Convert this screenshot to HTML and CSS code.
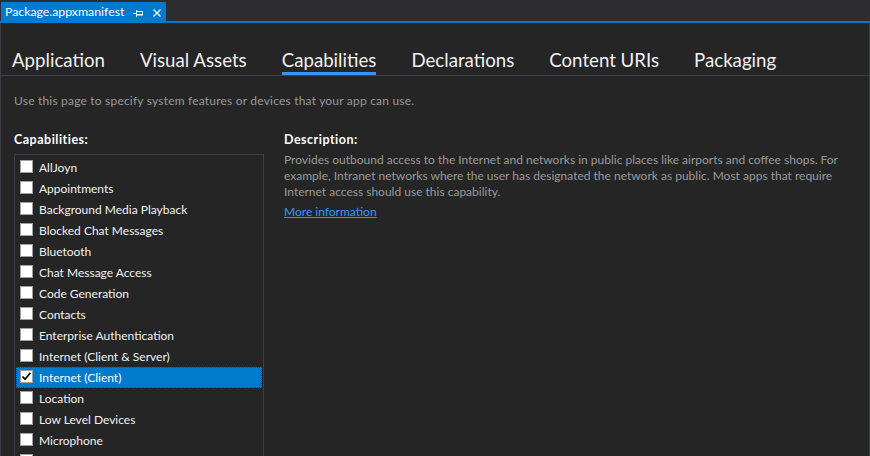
FILE: index.html
```html
<!DOCTYPE html>
<html lang="en">
<head>
<meta charset="utf-8">
<title>Package.appxmanifest</title>
<link rel="stylesheet" href="styles.css">
</head>
<body>
<div class="window">
  <div class="doctabs">
    <div class="doctab">
      <span class="doctab-title">Package.appxmanifest</span>
      <svg class="pin" width="10" height="7" viewBox="0 0 10 7" aria-hidden="true">
        <path d="M0 3.5H3.5M3.5 0V7M4 1.5H9.5V5M4 5H10" stroke="#ffffff" stroke-width="1" fill="none"/>
        <path d="M4 4.5H9.5" stroke="#ffffff" stroke-width="1"/>
      </svg>
      <svg class="close" width="8" height="8" viewBox="0 0 8 8" aria-hidden="true">
        <path d="M0.5 0.5L7.5 7.5M7.5 0.5L0.5 7.5" stroke="#ffffff" stroke-width="1.3" fill="none"/>
      </svg>
    </div>
  </div>
  <div class="pane">
    <nav class="pagetabs">
      <span class="ptab">Application</span>
      <span class="ptab">Visual Assets</span>
      <span class="ptab active">Capabilities</span>
      <span class="ptab">Declarations</span>
      <span class="ptab">Content URIs</span>
      <span class="ptab">Packaging</span>
    </nav>
    <p class="intro">Use this page to specify system features or devices that your app can use.</p>
    <div class="cols">
      <section class="caps">
        <h2 class="heading">Capabilities:</h2>
        <ul class="list">
          <li class="row"><span class="box"></span><span class="label">AllJoyn</span></li>
          <li class="row"><span class="box"></span><span class="label">Appointments</span></li>
          <li class="row"><span class="box"></span><span class="label">Background Media Playback</span></li>
          <li class="row"><span class="box"></span><span class="label">Blocked Chat Messages</span></li>
          <li class="row"><span class="box"></span><span class="label">Bluetooth</span></li>
          <li class="row"><span class="box"></span><span class="label">Chat Message Access</span></li>
          <li class="row"><span class="box"></span><span class="label">Code Generation</span></li>
          <li class="row"><span class="box"></span><span class="label">Contacts</span></li>
          <li class="row"><span class="box"></span><span class="label">Enterprise Authentication</span></li>
          <li class="row"><span class="box"></span><span class="label">Internet (Client &amp; Server)</span></li>
          <li class="row selected"><span class="box checked"><svg width="11" height="11" viewBox="0 0 11 11" aria-hidden="true"><path d="M1.5 5.5L4 8.2L9.5 1.8" stroke="#000000" stroke-width="1.7" fill="none"/></svg></span><span class="label">Internet (Client)</span></li>
          <li class="row"><span class="box"></span><span class="label">Location</span></li>
          <li class="row"><span class="box"></span><span class="label">Low Level Devices</span></li>
          <li class="row"><span class="box"></span><span class="label">Microphone</span></li>
          <li class="row"><span class="box"></span><span class="label">Music Library</span></li>
        </ul>
      </section>
      <section class="desc">
        <h2 class="heading">Description:</h2>
        <p class="desc-text">Provides outbound access to the Internet and networks in public places like airports and coffee shops. For<br>example, Intranet networks where the user has designated the network as public. Most apps that require<br>Internet access should use this capability.</p>
        <a class="more" href="#">More information</a>
      </section>
    </div>
  </div>
</div>
</body>
</html>
```

FILE: styles.css
```css
html, body {
  margin: 0;
  padding: 0;
}

body {
  background: #252526;
  color: #f1f1f1;
  font-family: Lato, "Segoe UI", "Open Sans", sans-serif;
  font-size: 12px;
  height: 456px;
  overflow: hidden;
}

.window {
  height: 456px;
  display: flex;
  flex-direction: column;
}

.doctabs {
  background: #2d2d30;
  padding-top: 2px;
  height: 19px;
  border-bottom: 2px solid #007acc;
  display: flex;
}

.doctab {
  margin-left: 1px;
  width: 165px;
  height: 19px;
  background: #007acc;
  display: flex;
  align-items: flex-start;
  padding-left: 4px;
  box-sizing: border-box;
  color: #ffffff;
}

.doctab-title {
  line-height: 18px;
  padding-top: 1px;
  font-size: 12.3px;
}

.pin {
  margin: 8px 0 0 9px;
}

.close {
  margin: 7px 0 0 10px;
}

.pane {
  flex: 1;
  min-height: 0;
  border-left: 1px solid #3f3f46;
  border-right: 1px solid #3f3f46;
  overflow: hidden;
}

.pagetabs {
  display: flex;
  gap: 35px;
  padding-left: 11px;
  border-bottom: 1px solid #3f3f46;
}

.ptab {
  font-size: 18.67px;
  line-height: 22px;
  padding: 26px 0 1px;
  border-bottom: 3px solid transparent;
  color: #f1f1f1;
}

.ptab.active {
  border-bottom-color: #3794ff;
}

.intro {
  margin: 17px 0 0 13px;
  line-height: 16px;
  color: #999999;
  letter-spacing: 0.2px;
}

.cols {
  display: flex;
  gap: 20px;
  margin-top: 23px;
  padding-left: 13px;
}

.heading {
  margin: 0;
  font-size: 12.5px;
  font-weight: bold;
  line-height: 16px;
  letter-spacing: 0.5px;
  color: #ffffff;
}

.caps {
  width: 250px;
  flex: none;
}

.list {
  margin: 6px 0 0;
  padding: 2px 1px 0;
  list-style: none;
  border: 1px solid #3f3f46;
}

.row {
  height: 21px;
  display: flex;
  align-items: flex-start;
  padding-left: 4px;
  box-sizing: border-box;
  line-height: 21px;
  color: #f1f1f1;
}

.row.selected {
  background: #007acc;
  outline: 1px dotted #1b3f66;
  outline-offset: -1px;
  color: #ffffff;
}

.box {
  width: 13px;
  height: 13px;
  margin: 3px 6px 0 0;
  box-sizing: border-box;
  background: #ffffff;
  border: 1px solid #a0a0a0;
  flex: none;
  display: flex;
  align-items: center;
  justify-content: center;
}

.desc {
  flex: 1;
  min-width: 0;
}

.desc-text {
  margin: 4px 0 0;
  line-height: 16px;
  color: #999999;
  white-space: nowrap;
}

.more {
  display: inline-block;
  margin-top: 4px;
  line-height: 16px;
  color: #3794ff;
  text-decoration: underline;
}
```
